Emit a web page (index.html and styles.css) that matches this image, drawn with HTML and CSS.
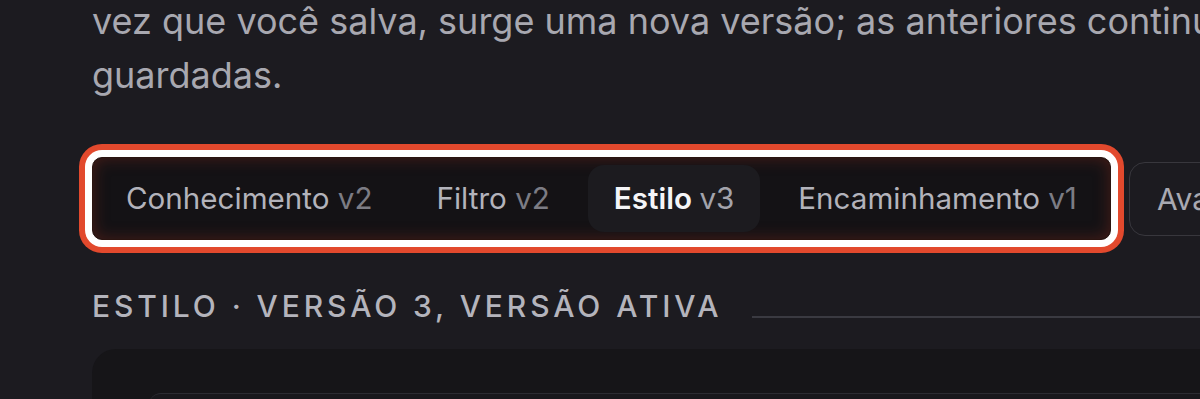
FILE: index.html
```html
<!DOCTYPE html>
<html>
<head>
    <title>Versões</title>
    <link rel="stylesheet" href="styles.css">
</head>
<body>
    <div class="page">
        <!-- descrição -->
        <p class="intro">vez que você salva, surge uma nova versão; as anteriores continuam<br>guardadas.</p>

        <!-- abas de módulos -->
        <div class="toolbar">
            <div class="tabs">
                <div class="tab">Conhecimento <span class="ver">v2</span></div>
                <div class="tab">Filtro <span class="ver">v2</span></div>
                <div class="tab active">Estilo <span class="ver">v3</span></div>
                <div class="tab">Encaminhamento <span class="ver">v1</span></div>
            </div>
            <button class="side-btn">Avançado</button>
        </div>

        <!-- versão ativa -->
        <div class="section-head">
            <h3>Estilo · versão 3, versão ativa</h3>
            <div class="rule"></div>
        </div>
        <div class="panel">
            <div class="panel-inner"></div>
        </div>
    </div>
</body>
</html>
```

FILE: styles.css
```css
body {
    margin: 0;
    padding: 0;
    background-color: #1c1b20;
    font-family: "Inter", "Noto Sans", sans-serif;
    color: #a9a9b1;
    overflow: hidden;
}
.page {
    padding-left: 92px;
    width: 1400px;
}
.intro {
    margin: -6px 0 0;
    font-size: 36px;
    line-height: 54px;
    white-space: nowrap;
    color: #a8a8b0;
}
.toolbar {
    display: flex;
    align-items: center;
    gap: 18px;
    margin-top: 55px;
}
.tabs {
    display: flex;
    gap: 12px;
    padding: 7px;
    background-color: #141215;
    border: 1px solid #2a1410;
    border-radius: 10px;
    box-shadow: inset 0 0 16px rgba(170, 50, 28, 0.35), 0 0 0 7px #ffffff, 0 0 0 13px #e2492d;
}
.tab {
    padding: 16px 26px;
    font-size: 29.6px;
    line-height: 35px;
    color: #b3b3bb;
    border-radius: 16px;
    white-space: nowrap;
}
.tab .ver {
    color: #7c7c84;
}
.tab.active {
    background-color: #1c1b1f;
    color: #f5f5f7;
    font-weight: 600;
}
.tab.active .ver {
    color: #a3a3ab;
    font-weight: 400;
}
.side-btn {
    height: 74px;
    padding: 0 27px;
    background: transparent;
    border: 1px solid #38373d;
    border-radius: 16px;
    font-family: inherit;
    font-size: 30px;
    color: #a9a9b1;
    white-space: nowrap;
}
.section-head {
    display: flex;
    align-items: center;
    margin-top: 49px;
}
.section-head h3 {
    margin: 0;
    font-size: 30px;
    line-height: 34px;
    font-weight: 500;
    letter-spacing: 0.13em;
    text-transform: uppercase;
    color: #b4b4bc;
    white-space: nowrap;
}
.rule {
    flex: 1;
    height: 2px;
    margin: 22px 0 0 29px;
    background-color: #3a3a41;
}
.panel {
    margin-top: 26px;
    padding: 44px 0 0 57px;
    background-color: #161518;
    border-radius: 24px;
    height: 200px;
}
.panel-inner {
    height: 100px;
    border-top: 1px solid #2c2c32;
    border-radius: 12px;
    background-color: #19181c;
}
```
